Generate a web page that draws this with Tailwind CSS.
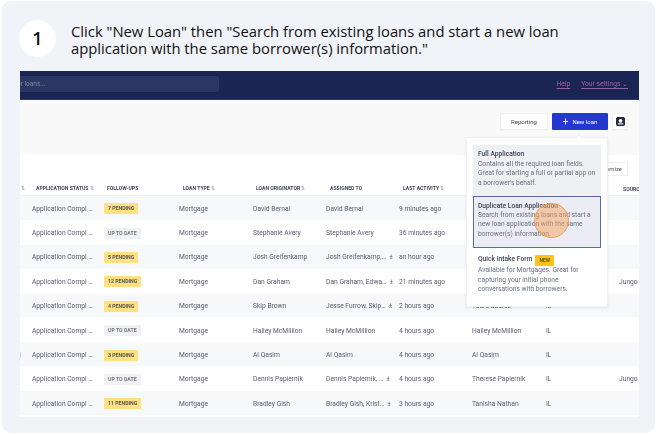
<!doctype html>
<html><head><meta charset="utf-8"><script src="https://cdn.jsdelivr.net/npm/@tailwindcss/browser@4"></script></head>
<body class="bg-white overflow-hidden">
<div class="w-[657px] h-[434px] p-[1px_2px]">
<div class="w-[653px] h-[432px] rounded-[9px] bg-[#f0f3f8] pt-[19px] pl-[17px]">
  <div class="flex gap-[15px] items-start h-[51px] font-['Open_Sans',sans-serif] text-[#111]">
    <div class="w-[37px] h-[37px] rounded-full bg-white flex items-center justify-center text-[18px] font-semibold shrink-0">1</div>
    <p class="text-[14.8px] leading-[17px] pt-[3px] w-[500px]">Click "New Loan" then "Search from existing loans and start a new loan application with the same borrower(s) information."</p>
  </div>
  <div class="relative ml-[1px] w-[619px] h-[346px] overflow-hidden bg-white blur-[0.4px] font-['Roboto',sans-serif] text-[6.7px] text-[#585d70]">
    <div class="h-[29px] bg-[#1a2553] border-b border-[#2f3963] flex items-center justify-between pr-[11px]">
      <div class="w-[199px] h-[16px] mb-[3px] bg-[#2b3662] rounded-r-[2px] text-[#7f87a4] text-[6.5px] leading-[16px] overflow-hidden"><span class="block -ml-[3px]">or loans...</span></div>
      <div class="flex gap-[11px] text-[6.7px] text-[#9a649f] mb-[2px]"><span class="underline underline-offset-2">Help</span><span class="underline underline-offset-2">Your settings ⌄</span></div>
    </div>
    <div class="h-[55px] bg-[#f9f9f9] flex items-start justify-end gap-[4px] pt-[13px] pr-[11px]">
      <div class="w-[48px] h-[17px] bg-white border border-[#eee] flex items-center justify-center text-[6px] text-[#444]">Reporting</div>
      <div class="w-[56px] h-[17px] bg-[#2438d0] rounded-[1px] flex items-center justify-center gap-[4px] text-[6px] text-white"><span class="text-[10px] leading-none">+</span>New loan</div>
      <div class="w-[16px] h-[17px] bg-white border border-[#eee] flex items-center justify-center">
        <svg width="9" height="9" viewBox="0 0 8 8"><rect width="8" height="8" rx="1.5" fill="#1f2937"/><circle cx="4" cy="3.4" r="1.7" fill="#fff"/><rect x="1.5" y="5.6" width="5" height="1" fill="#fff"/></svg>
      </div>
    </div>
    <div class="h-[41px] bg-white flex flex-col">
      <div class="h-[21px] flex justify-end pt-[7px] pr-[11px]"><div class="w-[60px] h-[14px] bg-white border border-[#eee] text-[6px] leading-[12px] text-right pr-[5px] text-[#555] shrink-0">Customize</div></div>
      <div class="grid grid-cols-[72px_75px_74px_73px_73px_73px_74px_73px] pl-[16px] pt-[9px] text-[5.1px] font-bold text-[#3f4558] uppercase whitespace-nowrap h-[20px] border-b border-[#f0f1f4]">
        <span>Application Status <i class="not-italic font-normal text-[#999]">⇅</i></span><span class="-ml-[1px]">Follow-ups</span><span>Loan Type <i class="not-italic font-normal text-[#999]">⇅</i></span><span class="-ml-[1px]">Loan Originator <i class="not-italic font-normal text-[#999]">⇅</i></span><span>Assigned To</span><span>Last Activity <i class="not-italic font-normal text-[#999]">⇅</i></span><span></span><span></span>
      </div>
    </div>
    <div class="absolute left-[603px] top-[115px] text-[5.1px] font-bold text-[#3f4558]">SOURCE</div>
    <div class="absolute left-[1px] top-[114px] text-[5px] text-[#999]">⇅</div>
    <div class="pl-[12px] grid grid-cols-[72px_75px_74px_73px_73px_73px_74px_73px_73px] auto-rows-[24.4px] items-center whitespace-nowrap [&>*]:h-full [&>*]:flex [&>*]:items-center [&>*]:pt-[1px] bg-[linear-gradient(#f7f8fa_50%,#fff_50%)] bg-[length:100%_48.8px] h-[220px]">
      <span>Application Compl …</span><span><b class="bg-[#ffe082] text-[#555] rounded-[1px] px-[4px] py-[2px] text-[5.2px] leading-[7px] font-bold">7 PENDING</b></span><span>Mortgage</span><span>David Bernal</span><span>David Bernal</span><span>9 minutes ago</span><span>David Bernal</span><span>IL</span><span></span>
      <span>Application Compl …</span><span><b class="bg-[#f0f1f5] text-[#777] rounded-[1px] px-[4px] py-[2px] text-[5.2px] leading-[7px] font-bold">UP TO DATE</b></span><span>Mortgage</span><span>Stephanie Avery</span><span>Stephanie Avery</span><span>36 minutes ago</span><span>Stephanie Avery</span><span>IL</span><span></span>
      <span>Application Compl …</span><span><b class="bg-[#ffe082] text-[#555] rounded-[1px] px-[4px] py-[2px] text-[5.2px] leading-[7px] font-bold">5 PENDING</b></span><span>Mortgage</span><span>Josh Greifenkamp</span><span>Josh Greifenkamp,… <i class="not-italic ml-[3px]">±</i></span><span>an hour ago</span><span>Josh Greifenkamp</span><span>IL</span><span></span>
      <span>Application Compl …</span><span><b class="bg-[#ffe082] text-[#555] rounded-[1px] px-[4px] py-[2px] text-[5.2px] leading-[7px] font-bold">12 PENDING</b></span><span>Mortgage</span><span>Dan Graham</span><span>Dan Graham, Edwa… <i class="not-italic ml-[3px]">±</i></span><span>21 minutes ago</span><span>Dan Graham</span><span>IL</span><span>Jungo</span>
      <span>Application Compl …</span><span><b class="bg-[#ffe082] text-[#555] rounded-[1px] px-[4px] py-[2px] text-[5.2px] leading-[7px] font-bold">4 PENDING</b></span><span>Mortgage</span><span>Skip Brown</span><span>Jesse Furrow, Skip… <i class="not-italic ml-[3px]">±</i></span><span>2 hours ago</span><span>Yaura Suarez</span><span>IL</span><span></span>
      <span>Application Compl …</span><span><b class="bg-[#f0f1f5] text-[#777] rounded-[1px] px-[4px] py-[2px] text-[5.2px] leading-[7px] font-bold">UP TO DATE</b></span><span>Mortgage</span><span>Hailey McMillion</span><span>Hailey McMillion</span><span>4 hours ago</span><span>Hailey McMillion</span><span>IL</span><span></span>
      <span>Application Compl …</span><span><b class="bg-[#ffe082] text-[#555] rounded-[1px] px-[4px] py-[2px] text-[5.2px] leading-[7px] font-bold">3 PENDING</b></span><span>Mortgage</span><span>Al Qasim</span><span>Al Qasim</span><span>4 hours ago</span><span>Al Qasim</span><span>IL</span><span></span>
      <span>Application Compl …</span><span><b class="bg-[#f0f1f5] text-[#777] rounded-[1px] px-[4px] py-[2px] text-[5.2px] leading-[7px] font-bold">UP TO DATE</b></span><span>Mortgage</span><span>Dennis Papiernik</span><span>Dennis Papiernik, … <i class="not-italic ml-[3px]">±</i></span><span>4 hours ago</span><span>Therese Papiernik</span><span>IL</span><span>Jungo</span>
      <span>Application Compl …</span><span><b class="bg-[#ffe082] text-[#555] rounded-[1px] px-[4px] py-[2px] text-[5.2px] leading-[7px] font-bold">11 PENDING</b></span><span>Mortgage</span><span>Bradley Gish</span><span>Bradley Gish, Krist… <i class="not-italic ml-[3px]">±</i></span><span>3 hours ago</span><span>Tanisha Nathan</span><span>IL</span><span></span>
    </div>
    <div class="absolute left-0 top-[281px] w-[1px] h-[6px] bg-[#bcd9ee]"></div>
    <div class="absolute left-[446px] top-[66px] w-[142px] h-[170px] bg-white border border-[#eef0f2] shadow-[0_1px_3px_rgba(0,0,0,0.08)] px-[6px] pt-[7px]">
      <div class="absolute -top-[3px] left-[109px] w-[6px] h-[6px] rotate-45 bg-white border-l border-t border-[#eef0f2]"></div>
      <div class="h-[51px] bg-[#eff0f3] px-[5px] pt-[5px] leading-[9.6px]">
        <div class="text-[#3c4257] font-medium">Full Application</div>
        <div class="text-[#6b7080]">Contains all the required loan fields. Great for starting a full or partial app on a borrower's behalf.</div>
      </div>
      <div class="h-[52px] bg-[#ecedf4] border-[1.5px] border-[#5a68b0] px-[4px] pt-[4.5px] leading-[9.4px]">
        <div class="text-[#3c4257] font-medium">Duplicate Loan Application</div>
        <div class="text-[#6b7080]">Search from existing loans and start a new loan application with the same borrower(s) information.</div>
      </div>
      <div class="px-[5px] pt-[6px] leading-[9.5px]">
        <div class="flex items-center gap-[3px] text-[#3c4257] font-medium h-[12px]">Quick Intake Form<span class="bg-[#fdc415] text-[#6b5200] text-[5px] font-bold px-[4px] leading-[11px] rounded-[1px]">NEW</span></div>
        <div class="text-[#6b7080]">Available for Mortgages. Great for capturing your initial phone conversations with borrowers.</div>
      </div>
      <div class="absolute left-[67px] top-[65px] w-[35px] h-[35px] rounded-full bg-[#f5a25d]/50 border border-[#f0a050]"></div>
    </div>
  </div>
</div>
</div>
</body></html>
